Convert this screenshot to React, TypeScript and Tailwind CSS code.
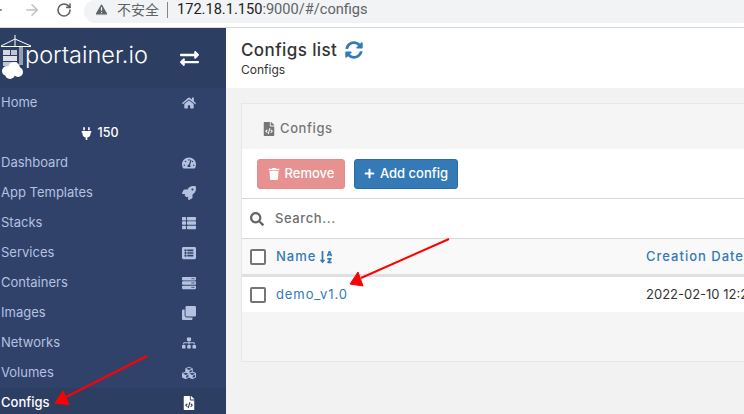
import { FaClone, FaCubes, FaExchangeAlt, FaFileCode, FaHome, FaListAlt, FaPlug, FaPlus, FaRocket, FaSearch, FaServer, FaSitemap, FaSortAlphaDown, FaSyncAlt, FaTachometerAlt, FaThList, FaTrash } from 'react-icons/fa'
import { ArrowLeft, ArrowRight, RotateCw, TriangleAlert } from 'lucide-react'

const navItems = [
  { label: 'Dashboard', icon: FaTachometerAlt },
  { label: 'App Templates', icon: FaRocket },
  { label: 'Stacks', icon: FaThList },
  { label: 'Services', icon: FaListAlt },
  { label: 'Containers', icon: FaServer },
  { label: 'Images', icon: FaClone },
  { label: 'Networks', icon: FaSitemap },
  { label: 'Volumes', icon: FaCubes },
]

function NavRow({ label, icon: Icon, active }: { label: string; icon: React.ComponentType<{ className?: string }>; active?: boolean }) {
  return (
    <div className={`flex h-[30px] items-center justify-between pl-[1px] pr-[30px] text-[13px] ${active ? 'bg-[#2d3e63] font-medium text-white' : 'text-[#b4c1e0]'}`}>
      <span>{label}</span>
      <span className="flex w-[14px] justify-center">
        <Icon className={`text-[14px] ${active ? 'text-white' : 'text-[#b4c1e0]'}`} />
      </span>
    </div>
  )
}

function Logo() {
  return (
    <svg width="32" height="50" viewBox="0 0 32 50" className="shrink-0">
      <g stroke="#fff" fill="none" strokeWidth="1">
        <path d="M1 12 L15 5 L31 12 M1 12.500 H31 M15 1 V12 M20 12 V31 M22 12 V31" />
      </g>
      <rect x="3" y="16" width="7" height="5" fill="#fff" opacity="0.8" />
      <rect x="11" y="16" width="6" height="5" fill="#fff" opacity="0.7" />
      <rect x="3" y="22" width="14" height="5" fill="#fff" opacity="0.85" />
      <rect x="3" y="28" width="14" height="4" fill="#fff" opacity="0.7" />
      <g fill="#fff">
        <circle cx="7" cy="37" r="5" />
        <circle cx="14" cy="34" r="6" />
        <circle cx="18" cy="38" r="5" />
        <circle cx="10" cy="40" r="5" />
      </g>
    </svg>
  )
}

function Checkbox() {
  return <span className="block h-[16px] w-[16px] rounded-[2px] border-2 border-[#757575] bg-white" />
}

export default function App() {
  return (
    <div className="relative h-[414px] w-[744px] overflow-hidden bg-white font-['Inter','Liberation_Sans',sans-serif]">
      {/* browser bar */}
      <div className="flex h-[28px] items-start border-b border-[#dadada] bg-white">
        <div className="flex h-[19px] w-[84px] shrink-0 items-center">
          <ArrowLeft size={18} strokeWidth={2} className="ml-[-13px] text-[#5f6368]" />
          <ArrowRight size={18} strokeWidth={2} className="ml-[18px] text-[#bdc1c6]" />
          <RotateCw size={16} strokeWidth={2.400} className="ml-[15px] text-[#5f6368]" />
        </div>
        <div className="flex h-[23px] flex-1 items-center rounded-l-[12px] bg-[#f1f3f4] pb-[4px] pl-[10px] font-['Roboto','Liberation_Sans',sans-serif] text-[14.600px]">
          <TriangleAlert size={15} fill="#5f6368" stroke="#f1f3f4" className="shrink-0" />
          <span className="ml-[8px] font-['Noto_Sans_CJK_SC',sans-serif] text-[14px] text-[#5f6368]">不安全</span>
          <span className="ml-[8px] mr-[9px] h-[16px] w-px bg-[#80868b]" />
          <span className="text-[#202124]">172.18.1.150</span>
          <span className="text-[#5f6368]">:9000/#/configs</span>
        </div>
      </div>

      <div className="flex h-[386px]">
        {/* sidebar */}
        <aside className="w-[226px] shrink-0 overflow-hidden bg-[#30426a]">
          <div className="flex h-[60px] items-center bg-[#2d3e63] pr-[27px]">
            <div className="flex flex-1 items-start self-start pt-[6px]">
              <Logo />
              <span className="ml-[-7px] mt-[6px] text-[23.500px] font-light leading-[30px] text-white">portainer.io</span>
            </div>
            <FaExchangeAlt className="text-[19px] text-white" />
          </div>
          <NavRow label="Home" icon={FaHome} />
          <div className="flex h-[30px] items-center justify-center gap-[5px] pr-[28px] text-[12.500px] font-medium text-white">
            <FaPlug className="text-[13px]" />
            <span>150</span>
          </div>
          {navItems.map((item) => (
            <NavRow key={item.label} label={item.label} icon={item.icon} />
          ))}
          <NavRow label="Configs" icon={FaFileCode} active />
        </aside>

        {/* main */}
        <main className="min-w-0 flex-1 bg-[#f2f2f2]">
          <div className="flex h-[60px] flex-col bg-white pl-[15px] pt-[11px] text-[#333]">
            <div className="flex items-center gap-[8px] text-[17px] font-medium leading-[22px] tracking-[0.4px]">
              <span>Configs list</span>
              <FaSyncAlt className="text-[18px] text-[#337ab7]" />
            </div>
            <div className="mt-[1px] text-[12px] leading-[16px]">Configs</div>
          </div>

          <div className="ml-[15px] mt-[15px] w-[520px] border-y border-l border-[#e6e6e6] bg-[#f5f5f5]">
            <div className="flex h-[45px] items-center gap-[4px] pl-[20px] pt-[4px] text-[13px] tracking-[0.6px] text-[#767676]">
              <FaFileCode className="text-[14px]" />
              <span className="font-medium">Configs</span>
            </div>
            <div className="flex h-[50px] items-center gap-[9px] border-b border-[#d9d9d9] bg-white pl-[15px] text-[13px] font-medium text-white">
              <button className="flex h-[30px] w-[88px] items-center justify-center gap-[5px] rounded-[3px] border border-[#e38d8b] bg-[#e79190]">
                <FaTrash className="text-[12px]" /> Remove
              </button>
              <button className="flex h-[30px] w-[104px] items-center justify-center gap-[5px] rounded-[3px] border border-[#2e6da4] bg-[#337ab7]">
                <FaPlus className="text-[11px]" /> Add config
              </button>
            </div>
            <div className="flex h-[39px] items-center gap-[11px] bg-white pl-[8px] text-[13px] font-medium tracking-[0.6px] text-[#6f6f6f]">
              <FaSearch className="text-[14px] text-[#666]" />
              <span>Search...</span>
            </div>
            <div className="flex h-[39px] items-center border-y border-[#d9d9d9] border-b-[3px] border-b-[#e0e0e0] bg-[#f9f9f9] pl-[8px] text-[13px] font-medium tracking-[1px] text-[#337ab7]">
              <Checkbox />
              <span className="ml-[10px] flex w-[370px] items-center gap-[3px]">
                Name <FaSortAlphaDown className="text-[14px]" />
              </span>
              <span className="whitespace-nowrap">Creation Date</span>
            </div>
            <div className="flex h-[35px] items-center bg-white pl-[8px] text-[13px]">
              <Checkbox />
              <span className="ml-[10px] w-[370px] tracking-[0.9px] text-[#337ab7]">demo_v1.0</span>
              <span className="whitespace-nowrap text-[#333]">2022-02-10 12:2</span>
            </div>
            <div className="h-[49px]" />
          </div>
        </main>
      </div>

      {/* red arrows drawn over the screenshot */}
      <svg width="744" height="414" className="pointer-events-none absolute left-0 top-0">
        <g fill="#ff0000" stroke="#ff0000">
          <line x1="147" y1="356" x2="66" y2="397" strokeWidth="2" />
          <polygon points="55,403 63,391 69,405" strokeWidth="1" />
          <line x1="449" y1="239" x2="361" y2="278" strokeWidth="2" />
          <polygon points="350,284 358,272 363,286" strokeWidth="1" />
        </g>
      </svg>
    </div>
  )
}
